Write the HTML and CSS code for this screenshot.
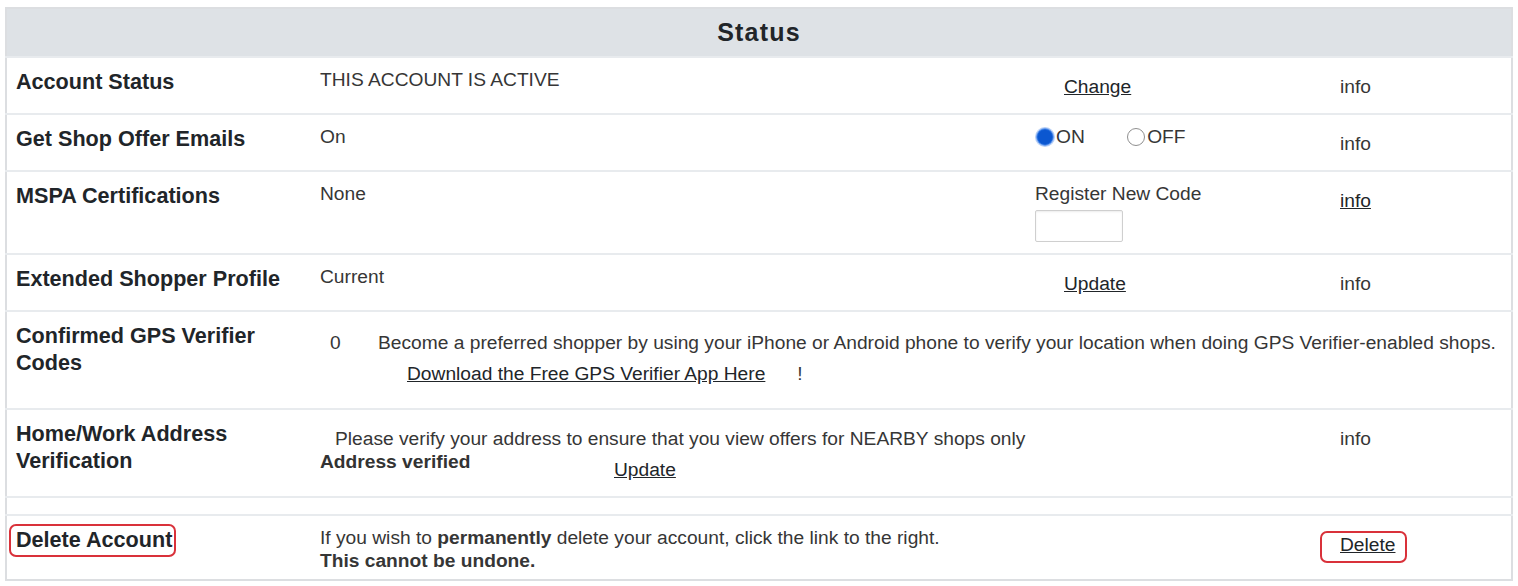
FILE: index.html
```html
<!DOCTYPE html>
<html lang="en">
<head>
<meta charset="utf-8">
<title>Status</title>
<link rel="stylesheet" href="styles.css">
</head>
<body>
<div class="page">
  <table class="status">
    <colgroup>
      <col class="c-label"><col class="c-value"><col class="c-action"><col class="c-info">
    </colgroup>
    <thead>
      <tr><th colspan="4" class="title">Status</th></tr>
    </thead>
    <tbody>
      <tr>
        <td class="label">Account Status</td>
        <td class="value">THIS ACCOUNT IS ACTIVE</td>
        <td class="action"><a class="action-link" href="#">Change</a></td>
        <td class="info"><span class="info-text">info</span></td>
      </tr>
      <tr>
        <td class="label">Get Shop Offer Emails</td>
        <td class="value">On</td>
        <td class="action">
          <label class="opt"><input class="radio" type="radio" name="emails" checked>ON</label>
          <label class="opt"><input class="radio" type="radio" name="emails">OFF</label>
        </td>
        <td class="info"><span class="info-text">info</span></td>
      </tr>
      <tr>
        <td class="label">MSPA Certifications</td>
        <td class="value">None</td>
        <td class="action">
          <div class="reg-title">Register New Code</div>
          <input class="code-input" type="text">
        </td>
        <td class="info"><a class="info-link" href="#">info</a></td>
      </tr>
      <tr>
        <td class="label">Extended Shopper Profile</td>
        <td class="value">Current</td>
        <td class="action"><a class="action-link" href="#">Update</a></td>
        <td class="info"><span class="info-text">info</span></td>
      </tr>
      <tr>
        <td class="label">Confirmed GPS Verifier Codes</td>
        <td class="value" colspan="3">
          <div class="gps">
            <div class="gps-count">0</div>
            <div class="gps-text">
              <div>Become a preferred shopper by using your iPhone or Android phone to verify your location when doing GPS Verifier-enabled shops.</div>
              <div class="gps-dl"><a class="plain-link" href="#">Download the Free GPS Verifier App Here</a><span class="bang">!</span></div>
            </div>
          </div>
        </td>
      </tr>
      <tr>
        <td class="label">Home/Work Address Verification</td>
        <td class="value" colspan="2">
          <div class="addr">
            <div class="addr-note">Please verify your address to ensure that you view offers for NEARBY shops only</div>
            <div class="addr-row">
              <b class="addr-status">Address verified</b>
              <a class="plain-link addr-update" href="#">Update</a>
            </div>
          </div>
        </td>
        <td class="info"><span class="info-text">info</span></td>
      </tr>
      <tr class="spacer-row">
        <td colspan="4"></td>
      </tr>
      <tr class="delete-row">
        <td class="label"><span class="flag">Delete Account</span></td>
        <td class="value">If you wish to <b>permanently</b> delete your account, click the link to the right.<br><b>This cannot be undone.</b></td>
        <td class="action"></td>
        <td class="info"><a class="info-link flag-link" href="#">Delete</a></td>
      </tr>
    </tbody>
  </table>
</div>
</body>
</html>
```

FILE: styles.css
```css
html, body {
  margin: 0;
  padding: 0;
  background: #ffffff;
}

body {
  font-family: "Liberation Sans", Arial, sans-serif;
  font-size: 19.2px;
  line-height: 23px;
  color: #363636;
}

.page {
  padding: 7px 5px 8px;
}

.status {
  width: 1507px;
  table-layout: fixed;
  border-collapse: collapse;
  border: 2px solid #dcdee1;
}

.c-label { width: 304px; }
.c-value { width: 715px; }
.c-action { width: 305px; }
.c-info { width: 182px; }

.title {
  background: #dee2e6;
  height: 47px;
  padding: 0;
  text-align: center;
  font-size: 25px;
  line-height: 29px;
  letter-spacing: 1.2px;
  font-weight: bold;
  color: #212529;
}

.status td {
  vertical-align: top;
  padding: 10px 10px 11px;
  border-top: 2px solid #e8ebee;
}

.status td.label {
  font-size: 21.6px;
  line-height: 27px;
  font-weight: bold;
  color: #212529;
  padding-left: 9px;
  padding-bottom: 18px;
}

.status td.info {
  padding-top: 17px;
}

.action-link {
  display: inline-block;
  margin: 7px 0 0 29px;
  color: #212529;
  text-decoration: underline;
}

.info-link,
.plain-link {
  color: #212529;
  text-decoration: underline;
}

.opt {
  display: inline-flex;
  align-items: center;
  margin-right: 36px;
}

.radio {
  appearance: none;
  -webkit-appearance: none;
  width: 18px;
  height: 18px;
  margin: 0 2px 0 1px;
  border-radius: 50%;
  border: 1px solid #8f8f8f;
  background: #ffffff;
}

.radio:checked {
  border: 1px solid #6b9ef0;
  background: radial-gradient(circle, #0b57d0 0 6.5px, #1a66db 7.5px);
  box-shadow: 0 0 0 1px #b7cff5;
}

.reg-title {
  line-height: 23px;
}

.code-input {
  display: block;
  box-sizing: border-box;
  width: 88px;
  height: 32px;
  margin: 5px 0 0;
  border: 1px solid #cfcfcf;
  border-radius: 2px;
  box-shadow: inset 0 1px 2px rgba(0, 0, 0, 0.08);
  background: #ffffff;
}

.gps {
  display: flex;
  margin: 9px 0 12px;
}

.gps-count {
  width: 58px;
  padding-left: 10px;
  box-sizing: border-box;
  flex: none;
}

.gps-dl {
  margin-top: 8px;
  padding-left: 29px;
}

.bang {
  margin-left: 32px;
}

.addr {
  margin: 7px 0 4px;
}

.addr-note {
  padding-left: 15px;
}

.addr-row {
  display: flex;
  align-items: flex-start;
}

.addr-status {
  width: 294px;
  color: #333333;
}

.addr-update {
  margin-top: 8px;
}

.spacer-row td {
  height: 16px;
  padding: 0;
}

.status .delete-row td {
  padding-bottom: 7px;
}

.flag {
  display: inline-block;
  padding: 0 2px 2px 5px;
  margin: -2px -4px -4px -7px;
  border: 2px solid #d9313a;
  border-radius: 7px;
}

.flag-link {
  display: inline-block;
  padding: 0 10px 5px 18px;
  margin: -2px -12px -7px -20px;
  border: 2px solid #d9313a;
  border-radius: 7px;
}
```
